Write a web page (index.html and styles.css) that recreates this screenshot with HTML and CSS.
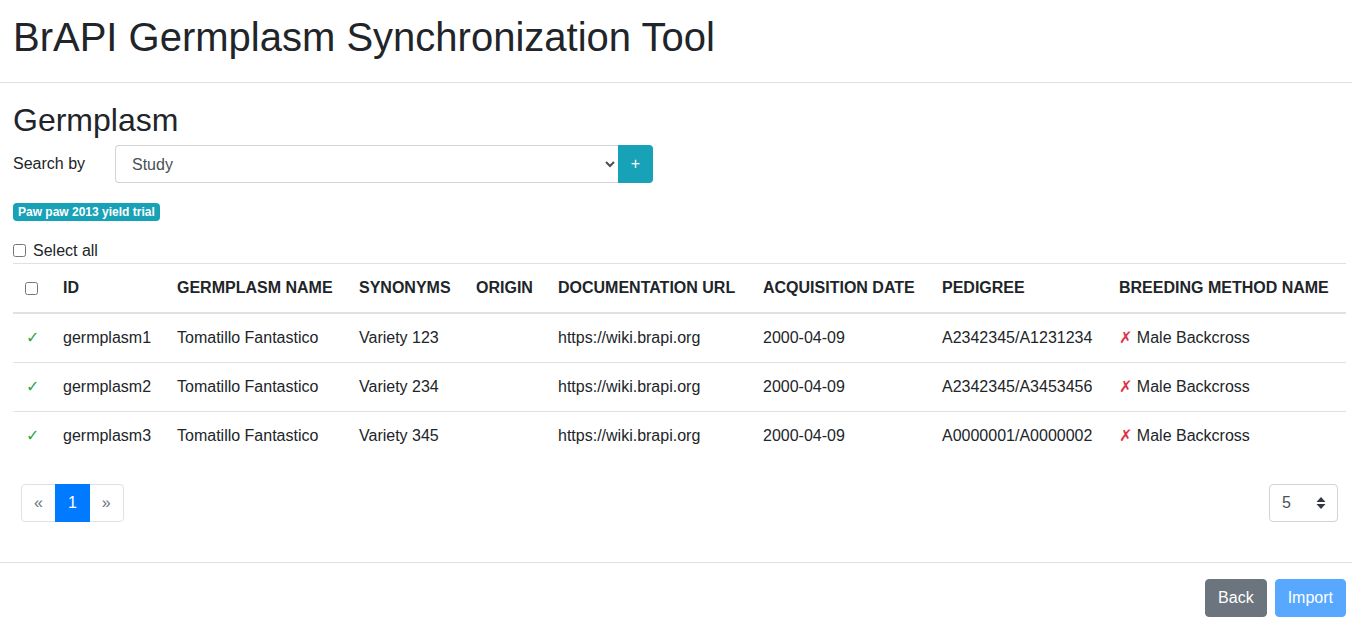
FILE: index.html
```html
<!DOCTYPE html>
<html lang="en">
<head>
<meta charset="utf-8">
<title>BrAPI Germplasm Synchronization Tool</title>
<link rel="stylesheet" href="styles.css">
</head>
<body>
<div class="app">
  <header class="app-header">
    <h1 class="app-title">BrAPI Germplasm Synchronization Tool</h1>
  </header>
  <main class="app-body">
    <h2 class="section-title">Germplasm</h2>
    <div class="search-row">
      <label class="search-label" for="searchBy">Search by</label>
      <div class="input-group">
        <select id="searchBy" class="form-select">
          <option>Study</option>
        </select>
        <button class="btn-add" type="button">+</button>
      </div>
    </div>
    <div class="badges">
      <span class="badge">Paw paw 2013 yield trial</span>
    </div>
    <div class="select-all">
      <input type="checkbox" id="selectAll" class="check">
      <label for="selectAll">Select all</label>
    </div>
    <table class="data-table">
      <colgroup>
        <col class="c-check">
        <col class="c-id">
        <col class="c-name">
        <col class="c-syn">
        <col class="c-origin">
        <col class="c-url">
        <col class="c-date">
        <col class="c-ped">
        <col class="c-method">
      </colgroup>
      <thead>
        <tr>
          <th><input type="checkbox" class="check"></th>
          <th>ID</th>
          <th>Germplasm Name</th>
          <th>Synonyms</th>
          <th>Origin</th>
          <th>Documentation URL</th>
          <th>Acquisition Date</th>
          <th>Pedigree</th>
          <th>Breeding Method Name</th>
        </tr>
      </thead>
      <tbody>
        <tr>
          <td><span class="ok">✓</span></td>
          <td>germplasm1</td>
          <td>Tomatillo Fantastico</td>
          <td>Variety 123</td>
          <td></td>
          <td>https://wiki.brapi.org</td>
          <td>2000-04-09</td>
          <td>A2342345/A1231234</td>
          <td><span class="bad">✗</span> Male Backcross</td>
        </tr>
        <tr>
          <td><span class="ok">✓</span></td>
          <td>germplasm2</td>
          <td>Tomatillo Fantastico</td>
          <td>Variety 234</td>
          <td></td>
          <td>https://wiki.brapi.org</td>
          <td>2000-04-09</td>
          <td>A2342345/A3453456</td>
          <td><span class="bad">✗</span> Male Backcross</td>
        </tr>
        <tr>
          <td><span class="ok">✓</span></td>
          <td>germplasm3</td>
          <td>Tomatillo Fantastico</td>
          <td>Variety 345</td>
          <td></td>
          <td>https://wiki.brapi.org</td>
          <td>2000-04-09</td>
          <td>A0000001/A0000002</td>
          <td><span class="bad">✗</span> Male Backcross</td>
        </tr>
      </tbody>
    </table>
    <div class="table-footer">
      <ul class="pagination">
        <li class="page-item"><span class="page-link">«</span></li>
        <li class="page-item active"><span class="page-link">1</span></li>
        <li class="page-item"><span class="page-link">»</span></li>
      </ul>
      <div class="page-size">
        <span>5</span>
        <svg class="sort-icon" width="10" height="14" viewBox="0 0 10 14" aria-hidden="true">
          <path d="M5 1 L9.5 6 H0.5 Z" fill="#343a40"/>
          <path d="M5 13 L9.5 8 H0.5 Z" fill="#343a40"/>
        </svg>
      </div>
    </div>
  </main>
  <footer class="app-footer">
    <button class="btn btn-secondary" type="button">Back</button>
    <button class="btn btn-primary" type="button" disabled>Import</button>
  </footer>
</div>
</body>
</html>
```

FILE: styles.css
```css
* { box-sizing: border-box; }

html, body {
  margin: 0;
  padding: 0;
  background: #fff;
}

body {
  font-family: "Liberation Sans", Arial, sans-serif;
  font-size: 16px;
  line-height: 1.5;
  color: #212529;
}

.app-header {
  padding: 13px 6px 0 13px;
  border-bottom: 1px solid #dee2e6;
  height: 83px;
}

.app-title {
  margin: 0;
  font-size: 40px;
  font-weight: 400;
  line-height: 48px;
}

.app-body {
  padding: 18px 6px 0 13px;
}

.section-title {
  margin: 0 0 6px;
  font-size: 32px;
  font-weight: 400;
  line-height: 38px;
}

.search-row {
  display: flex;
  align-items: center;
}

.search-label {
  width: 102px;
  flex: none;
}

.input-group {
  display: flex;
  width: 538px;
}

.form-select {
  flex: 1;
  height: 38px;
  padding: 0 8px 0 12px;
  font-family: inherit;
  font-size: 16px;
  color: #495057;
  background: #fff;
  border: 1px solid #ced4da;
  border-right: none;
  border-radius: 4px 0 0 4px;
}

.btn-add {
  width: 35px;
  height: 38px;
  padding: 0;
  border: none;
  border-radius: 0 4px 4px 0;
  background: #17a2b8;
  color: #fff;
  font-family: inherit;
  font-size: 16px;
}

.badges {
  margin-top: 20px;
  line-height: 18px;
  height: 18px;
}

.badge {
  display: inline-block;
  padding: 3px 5px;
  font-size: 12px;
  font-weight: 700;
  line-height: 12px;
  color: #fff;
  background: #17a2b8;
  border-radius: 4px;
  vertical-align: top;
}

.select-all {
  display: flex;
  align-items: center;
  gap: 7px;
  margin-top: 17px;
  height: 25px;
}

.check {
  width: 13px;
  height: 13px;
  margin: 0;
}

.data-table {
  width: 1333px;
  border-collapse: collapse;
  table-layout: fixed;
}

.c-check { width: 38px; }
.c-id { width: 114px; }
.c-name { width: 182px; }
.c-syn { width: 117px; }
.c-origin { width: 82px; }
.c-url { width: 205px; }
.c-date { width: 179px; }
.c-ped { width: 177px; }
.c-method { width: 239px; }

.data-table th,
.data-table td {
  padding: 12px;
  border-top: 1px solid #dee2e6;
  text-align: left;
  vertical-align: middle;
  white-space: nowrap;
}

.data-table th {
  font-weight: 700;
  text-transform: uppercase;
  border-bottom: 2px solid #dee2e6;
}

.data-table th .check {
  display: block;
}

.ok {
  color: #28a745;
  font-family: "DejaVu Sans", sans-serif;
  font-size: 16px;
  padding-left: 1px;
}

.bad {
  color: #dc3545;
  font-family: "DejaVu Sans", sans-serif;
  font-size: 16px;
}

.table-footer {
  display: flex;
  justify-content: space-between;
  align-items: center;
  padding: 0 8px;
  margin-top: 24px;
}

.pagination {
  display: flex;
  list-style: none;
  margin: 0;
  padding: 0;
}

.page-link {
  display: block;
  padding: 8px 12px;
  line-height: 20px;
  color: #6c757d;
  background: #fff;
  border: 1px solid #dee2e6;
  margin-left: -1px;
}

.page-item:first-child .page-link {
  margin-left: 0;
  border-radius: 4px 0 0 4px;
}

.page-item:last-child .page-link {
  border-radius: 0 4px 4px 0;
}

.page-item.active .page-link {
  color: #fff;
  background: #007bff;
  border-color: #007bff;
  position: relative;
}

.page-size {
  display: flex;
  align-items: center;
  justify-content: space-between;
  width: 69px;
  height: 38px;
  padding: 0 11px 0 12px;
  border: 1px solid #ced4da;
  border-radius: 4px;
  color: #495057;
}

.sort-icon {
  display: block;
}

.app-footer {
  display: flex;
  justify-content: flex-end;
  margin-top: 40px;
  padding: 12px 2px 0 0;
  border-top: 1px solid #dee2e6;
}

.btn {
  margin: 4px;
  padding: 6px 12px;
  font-family: inherit;
  font-size: 16px;
  line-height: 24px;
  color: #fff;
  border: 1px solid transparent;
  border-radius: 4px;
}

.btn-secondary {
  background: #6c757d;
  border-color: #6c757d;
}

.btn-primary {
  background: #007bff;
  border-color: #007bff;
}

.btn-primary:disabled {
  opacity: 0.65;
}
```
